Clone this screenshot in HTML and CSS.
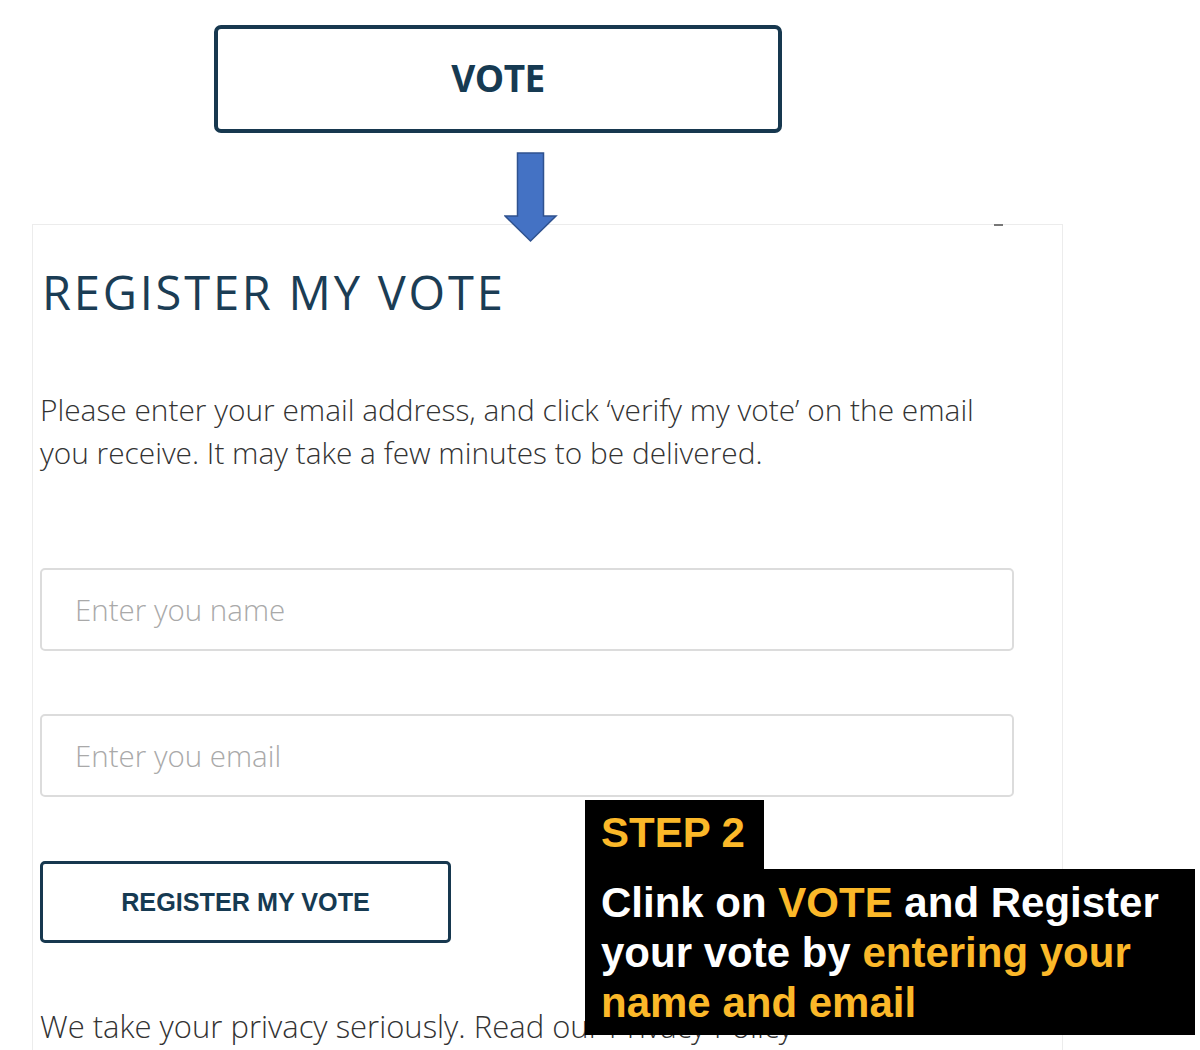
FILE: index.html
```html
<!DOCTYPE html>
<html>
<head>
<meta charset="utf-8">
<link rel="stylesheet" href="styles.css">
</head>
<body>
<div class="page">
  <div class="vote-row">
    <div class="vote-btn">VOTE</div>
  </div>
  <div class="arrow-row">
    <svg class="arrow" width="54" height="92" viewBox="0 0 54 92">
      <polygon points="13.5,1 39.5,1 39.5,64 52,64 26.5,89 1,64 13.5,64" fill="#4472c4" stroke="#2f528f" stroke-width="1.5"/>
    </svg>
  </div>
  <div class="card">
    <span class="mark"></span>
    <h1 class="title">REGISTER MY VOTE</h1>
    <p class="intro">Please enter your email address, and click ‘verify my vote’ on the email you receive. It may take a few minutes to be delivered.</p>
    <div class="field"><span class="placeholder">Enter you name</span></div>
    <div class="field second"><span class="placeholder">Enter you email</span></div>
    <div class="reg-btn">REGISTER MY VOTE</div>
    <p class="privacy">We take your privacy seriously. Read our Privacy Policy</p>
  </div>
  <div class="callout">
    <div class="step">STEP 2</div>
    <div class="msg">Clink on <span class="hl">VOTE</span> and Register your vote by <span class="hl">entering your name and email</span></div>
  </div>
</div>
</body>
</html>
```
FILE: styles.css
```css
html, body {
  margin: 0;
  padding: 0;
  background: #ffffff;
}
.page {
  position: relative;
  width: 1200px;
  height: 1050px;
  overflow: hidden;
  font-family: "Open Sans", "Liberation Sans", sans-serif;
}
.vote-row {
  padding: 25px 0 0 214px;
}
.vote-btn {
  box-sizing: border-box;
  width: 568px;
  height: 108px;
  padding-bottom: 4px;
  border: 4px solid #17384f;
  border-radius: 7px;
  display: flex;
  align-items: center;
  justify-content: center;
  font-family: "Open Sans", sans-serif;
  font-weight: 700;
  font-size: 37px;
  letter-spacing: -0.5px;
  color: #163a52;
}
.arrow-row {
  position: relative;
  z-index: 2;
  height: 72px;
  padding: 19px 0 0 504px;
}
.arrow {
  display: block;
}
.card {
  position: relative;
  margin-left: 32px;
  width: 1031px;
  height: 900px;
  border: 1px solid #ececec;
  border-bottom: none;
  padding-left: 7px;
  box-sizing: border-box;
}
.mark {
  position: absolute;
  top: -1px;
  left: 961px;
  width: 9px;
  height: 2px;
  background: #777;
}
.title {
  margin: 35px 0 0 2px;
  font-family: "Open Sans", sans-serif;
  font-weight: 400;
  font-size: 47px;
  line-height: 64px;
  letter-spacing: 2.8px;
  color: #1b3d55;
}
.intro {
  margin: 64px 0 0 0;
  width: 970px;
  font-family: "Open Sans", sans-serif;
  font-weight: 300;
  font-size: 29.85px;
  line-height: 43px;
  color: #333;
}
.field {
  box-sizing: border-box;
  width: 974px;
  height: 83px;
  margin-top: 94px;
  border: 2px solid #dcdcdc;
  border-radius: 5px;
  display: flex;
  align-items: center;
  padding-left: 33px;
}
.field.second {
  margin-top: 63px;
}
.placeholder {
  font-family: "Open Sans", sans-serif;
  font-weight: 300;
  font-size: 29.5px;
  color: #a9a9a9;
}
.reg-btn {
  box-sizing: border-box;
  width: 411px;
  height: 82px;
  margin-top: 64px;
  border: 3px solid #17384f;
  border-radius: 5px;
  display: flex;
  align-items: center;
  justify-content: center;
  font-family: "Liberation Sans", Arial, sans-serif;
  font-weight: 700;
  font-size: 25.2px;
  color: #163a52;
}
.privacy {
  margin: 62px 0 0 0;
  font-family: "Open Sans", sans-serif;
  font-weight: 300;
  font-size: 31px;
  line-height: 43px;
  color: #333;
  white-space: nowrap;
}
.callout {
  position: absolute;
  left: 585px;
  top: 800px;
  font-family: "Liberation Sans", Arial, sans-serif;
  font-weight: 700;
  color: #ffffff;
}
.step {
  display: inline-block;
  background: #000;
  color: #fbb829;
  font-size: 42px;
  line-height: 50px;
  padding: 8px 19px 12px 16px;
  vertical-align: top;
}
.msg {
  background: #000;
  width: 610px;
  box-sizing: border-box;
  padding: 9px 0 7px 16px;
  font-size: 42px;
  line-height: 50px;
  margin-top: -1px;
}
.hl {
  color: #fbb829;
}
```
